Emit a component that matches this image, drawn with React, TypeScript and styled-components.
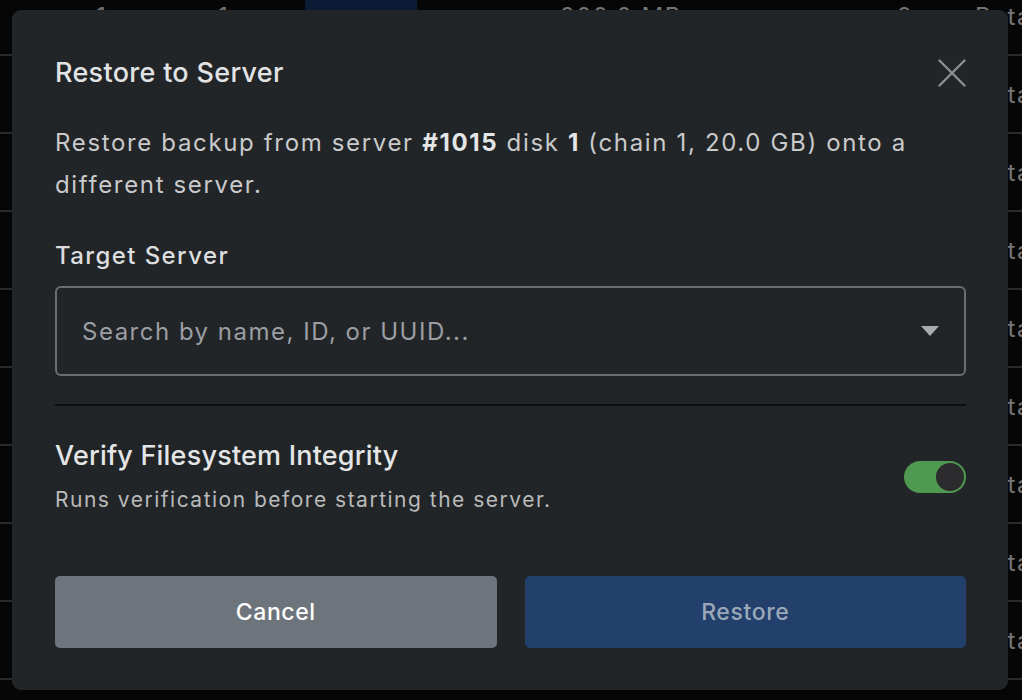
import React from 'react';
import styled, { createGlobalStyle } from 'styled-components';

const GlobalStyle = createGlobalStyle`
  html, body {
    margin: 0;
    padding: 0;
    background: #0c0c0c;
    overflow: hidden;
    font-family: Inter, "Noto Sans", "Liberation Sans", sans-serif;
  }
`;

interface BackupRow {
  id: number;
  chain: string;
  disk: string;
  size: string;
  count: string;
  action: string;
}

const rows: BackupRow[] = Array.from({ length: 9 }, (_, i) => ({
  id: i,
  chain: '1',
  disk: '1',
  size: '200.0 MB',
  count: '2',
  action: 'Rotate',
}));

const App: React.FC = () => {
  return (
    <>
      <GlobalStyle />
      <Table>
        {rows.map((r, i) => (
          <Row key={r.id}>
            <Cell $w={122}>{r.chain}</Cell>
            <Cell $w={87}>{r.disk}</Cell>
            <Cell $w={255}>{i === 0 ? <Badge /> : null}</Cell>
            <Cell $w={337}>{r.size}</Cell>
            <Cell $w={78}>{r.count}</Cell>
            <Cell $w={200}>{r.action}</Cell>
          </Row>
        ))}
      </Table>

      <Backdrop>
        <Modal role="dialog" aria-labelledby="restore-title">
          <Header>
            <Title id="restore-title">Restore to Server</Title>
            <CloseButton aria-label="Close">
              <svg width="28" height="28" viewBox="0 0 28 28" fill="none">
                <path d="M1.5 1.5 L26.5 26.5 M26.5 1.5 L1.5 26.5" stroke="#8c8e90" strokeWidth="2.4" strokeLinecap="round" />
              </svg>
            </CloseButton>
          </Header>

          <Description>
            Restore backup from server <strong>#1015</strong> disk <strong>1</strong> (chain 1, 20.0 GB) onto a
            different server.
          </Description>

          <FieldLabel>Target Server</FieldLabel>
          <Select>
            <Placeholder>Search by name, ID, or UUID...</Placeholder>
            <Caret />
          </Select>

          <Divider />

          <OptionRow>
            <OptionText>
              <OptionTitle>Verify Filesystem Integrity</OptionTitle>
              <OptionHint>Runs verification before starting the server.</OptionHint>
            </OptionText>
            <Toggle role="switch" aria-checked $on>
              <Knob />
            </Toggle>
          </OptionRow>

          <Actions>
            <ActionButton $variant="secondary">Cancel</ActionButton>
            <ActionButton $variant="primary" disabled>
              Restore
            </ActionButton>
          </Actions>
        </Modal>
      </Backdrop>
    </>
  );
};

export default App;

const Table = styled.div`
  margin-top: -22px;
  color: #e8e8e8;
  font-size: 24px;
  letter-spacing: 1.5px;
`;

const Row = styled.div`
  display: flex;
  align-items: center;
  height: 78px;
  padding-left: 96px;
  border-bottom: 2px solid #545454;
  box-sizing: border-box;
  white-space: nowrap;
`;

const Cell = styled.div<{ $w: number }>`
  flex: 0 0 ${p => p.$w}px;
  display: flex;
  align-items: center;
`;

const Badge = styled.span`
  display: block;
  width: 112px;
  height: 56px;
  border-radius: 10px;
  background: #16346a;
`;

const Backdrop = styled.div`
  position: fixed;
  inset: 0;
  padding-right: 2px;
  display: flex;
  align-items: center;
  justify-content: center;
  background: rgba(0, 0, 0, 0.5);
`;

const Modal = styled.div`
  width: 996px;
  box-sizing: border-box;
  padding: 47px 42px 42px 43px;
  background: #222527;
  border-radius: 9px;
  display: flex;
  flex-direction: column;
`;

const Header = styled.div`
  display: flex;
  align-items: center;
  justify-content: space-between;
  height: 32px;
`;

const Title = styled.h2`
  margin: 0;
  font-size: 27px;
  line-height: 32px;
  letter-spacing: 0.3px;
  font-weight: 500;
  color: #e2e3e4;
`;

const CloseButton = styled.button`
  display: flex;
  padding: 0;
  border: 0;
  background: none;
  cursor: pointer;
`;

const Description = styled.p`
  margin: 33px 0 0;
  font-size: 24px;
  line-height: 42px;
  letter-spacing: 1.65px;
  color: #c9cacb;

  strong {
    font-weight: 700;
    color: #e4e5e6;
  }
`;

const FieldLabel = styled.label`
  margin-top: 34px;
  font-size: 24px;
  line-height: 32px;
  letter-spacing: 1.4px;
  font-weight: 500;
  color: #dcdddf;
`;

const Select = styled.div`
  margin-top: 14px;
  height: 90px;
  box-sizing: border-box;
  border: 2px solid #6a6d71;
  border-radius: 6px;
  display: flex;
  align-items: center;
  justify-content: space-between;
  padding: 0 25px 0 25px;
`;

const Placeholder = styled.span`
  font-size: 24px;
  letter-spacing: 1.5px;
  color: #9b9ea2;
`;

const Caret = styled.span`
  width: 0;
  height: 0;
  border-left: 9px solid transparent;
  border-right: 9px solid transparent;
  border-top: 10px solid #a9abad;
`;

const Divider = styled.hr`
  margin: 28px 0 0;
  border: 0;
  height: 2px;
  background: #0d0e0f;
`;

const OptionRow = styled.div`
  margin-top: 34px;
  display: flex;
  align-items: center;
  justify-content: space-between;
`;

const OptionText = styled.div`
  display: flex;
  flex-direction: column;
`;

const OptionTitle = styled.span`
  font-size: 27px;
  line-height: 32px;
  letter-spacing: 0.2px;
  font-weight: 500;
  color: #e4e5e6;
`;

const OptionHint = styled.span`
  margin-top: 14px;
  font-size: 21px;
  line-height: 28px;
  letter-spacing: 1.5px;
  color: #b9babb;
`;

const Toggle = styled.div<{ $on?: boolean }>`
  width: 62px;
  height: 32px;
  box-sizing: border-box;
  border-radius: 16px;
  padding: 2px;
  background: ${p => (p.$on ? '#4f9a50' : '#55585c')};
  display: flex;
  justify-content: ${p => (p.$on ? 'flex-end' : 'flex-start')};
`;

const Knob = styled.span`
  width: 28px;
  height: 28px;
  border-radius: 50%;
  background: #2c2b2e;
`;

const Actions = styled.div`
  margin-top: 62px;
  display: grid;
  grid-template-columns: 1fr 1fr;
  gap: 28px;
`;

const ActionButton = styled.button<{ $variant: 'primary' | 'secondary' }>`
  height: 72px;
  border: 0;
  border-radius: 5px;
  font-family: inherit;
  font-size: 23px;
  letter-spacing: 0.6px;
  font-weight: 500;
  background: ${p => (p.$variant === 'primary' ? '#22406b' : '#6d747c')};
  color: ${p => (p.$variant === 'primary' ? '#9ba8b9' : '#ffffff')};
  cursor: pointer;

  &:disabled {
    cursor: default;
  }
`;
